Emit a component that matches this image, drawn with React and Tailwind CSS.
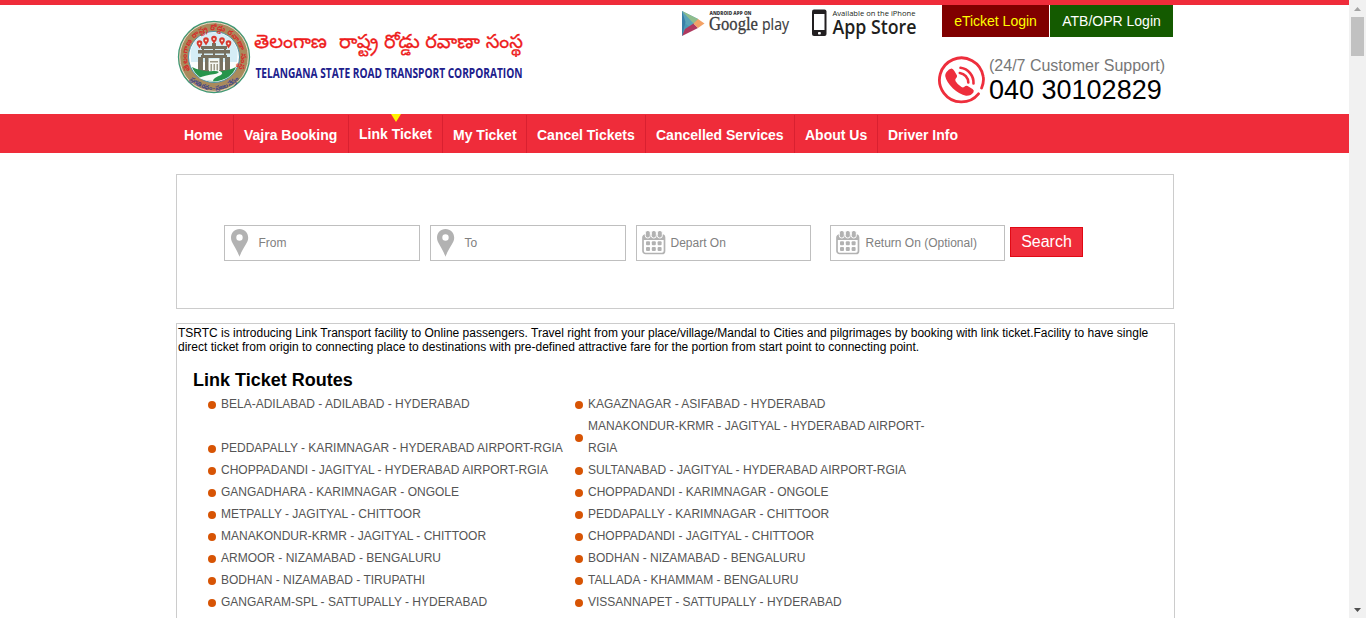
import React from 'react';

const SANS = "font-['Liberation_Sans',Arial,sans-serif]";

const NAV = [
  { label: 'Home', box: 'w-[58px] pl-[8px]' },
  { label: 'Vajra Booking', box: 'w-[115px] pl-[10px]' },
  { label: 'Link Ticket', box: 'w-[94px] pl-[10px]', active: true },
  { label: 'My Ticket', box: 'w-[84px] pl-[10px]' },
  { label: 'Cancel Tickets', box: 'w-[119px] pl-[10px]' },
  { label: 'Cancelled Services', box: 'w-[149px] pl-[10px]' },
  { label: 'About Us', box: 'w-[83px] pl-[10px]' },
  { label: 'Driver Info', box: 'w-[100px] pl-[10px]', last: true },
];

const ROUTES = [
  ['BELA-ADILABAD - ADILABAD - HYDERABAD', 'KAGAZNAGAR - ASIFABAD - HYDERABAD'],
  ['PEDDAPALLY - KARIMNAGAR - HYDERABAD AIRPORT-RGIA', 'MANAKONDUR-KRMR - JAGITYAL - HYDERABAD AIRPORT-RGIA'],
  ['CHOPPADANDI - JAGITYAL - HYDERABAD AIRPORT-RGIA', 'SULTANABAD - JAGITYAL - HYDERABAD AIRPORT-RGIA'],
  ['GANGADHARA - KARIMNAGAR - ONGOLE', 'CHOPPADANDI - KARIMNAGAR - ONGOLE'],
  ['METPALLY - JAGITYAL - CHITTOOR', 'PEDDAPALLY - KARIMNAGAR - CHITTOOR'],
  ['MANAKONDUR-KRMR - JAGITYAL - CHITTOOR', 'CHOPPADANDI - JAGITYAL - CHITTOOR'],
  ['ARMOOR - NIZAMABAD - BENGALURU', 'BODHAN - NIZAMABAD - BENGALURU'],
  ['BODHAN - NIZAMABAD - TIRUPATHI', 'TALLADA - KHAMMAM - BENGALURU'],
  ['GANGARAM-SPL - SATTUPALLY - HYDERABAD', 'VISSANNAPET - SATTUPALLY - HYDERABAD'],
];

function Emblem() {
  return (
    <svg width="74" height="74" viewBox="0 0 74 74" className="shrink-0">
      <defs>
        <path id="ringTop" d="M13.3 50 A27 27 0 1 1 60.700 50" />
        <path id="ringBottom" d="M11.200 57.500 A33 33 0 0 0 62.800 57.500" />
      </defs>
      <circle cx="37" cy="37" r="35.5" fill="#a98a5c" stroke="#3f9a76" strokeWidth="1.3" />
      <circle cx="37" cy="37" r="34.3" fill="none" stroke="#e6dcca" strokeWidth="1" />
      <circle cx="37" cy="37" r="25.5" fill="#fbfdfd" stroke="#4d93a8" strokeWidth="1" />
      <path d="M13.500 31 Q18 14 37 12.500 Q56 14 60.500 31 L60 42 H14Z" fill="#d5edf6" />
      <g fill="#77705f">
        <path d="M24 26h26v3H24zM21 30h32v3.500H21zM24 35h26v3H24zM21 37h5v15h-5zM28 36h3.500v15H28zM42.500 36H46v15h-3.500zM48 37h5v15h-5zM20 50h12v3H20zM42 50h12v3H42z" />
        <path d="M35 23h4v4h-4zM25 28h2v8h-2zM47 28h2v8h-2zM36 29h2v8h-2z" />
      </g>
      <g fill="#d8392f">
        <circle cx="22.500" cy="23" r="2.800" /><circle cx="29" cy="20" r="2.800" /><circle cx="37" cy="18.500" r="2.800" />
        <circle cx="45" cy="20" r="2.800" /><circle cx="51.500" cy="23" r="2.800" />
        <path d="M20 24.500l2.500 4 2.500-4zM26.500 21.500l2.500 4 2.500-4zM34.500 20l2.500 4 2.500-4zM42.500 21.500l2.500 4 2.500-4zM49 24.500l2.500 4 2.500-4z" />
      </g>
      <g fill="#fff3df">
        <circle cx="22.500" cy="23.500" r="0.900" /><circle cx="29" cy="20.500" r="0.900" /><circle cx="37" cy="19" r="0.900" /><circle cx="45" cy="20.500" r="0.900" /><circle cx="51.500" cy="23.500" r="0.900" />
      </g>
      <path d="M32 39h10v12H32z" fill="#f6f7f3" />
      <path d="M33 41h8v1.500h-8zM33.500 44h1.500v7h-1.500zM36.500 44H38v7h-1.500zM39.500 44H41v7h-1.500z" fill="#9b9785" />
      <path d="M15 47 Q24 52 37 51 Q50 52 59 47 Q54 60 37 61.500 Q20 60 15 47Z" fill="#27944b" />
      <path d="M34 50 Q47 51.500 38 54 Q27 55.500 22 58 Q28 61 36 61 Q36 58 44 55 Q48 52 39 50Z" fill="#f8faf7" />
      <text fontFamily="Noto Sans Telugu, Noto Sans, sans-serif" fontSize="7.600" fontWeight="700" fill="#d52e2c">
        <textPath href="#ringTop" textLength="110">తెలంగాణ రాష్ట్ర రోడ్డు రవాణా సంస్థ</textPath>
      </text>
      <text fontFamily="Noto Sans Telugu, Noto Sans, sans-serif" fontSize="6.200" fontWeight="700" fill="#41468d">
        <textPath href="#ringBottom" startOffset="2" textLength="55">ప్రగతి రథం - ప్రజల నేస్తం</textPath>
      </text>
    </svg>
  );
}

function Brand() {
  return (
    <div className="flex pt-[15px] pl-px">
      <Emblem />
      <svg width="280" height="74" viewBox="0 0 280 74" className="shrink-0">
        <text x="3" y="28" textLength="73" lengthAdjust="spacingAndGlyphs" fontFamily="Noto Sans Telugu, Noto Sans, sans-serif" fontSize="19" fill="#ee1c1c" stroke="#ee1c1c" strokeWidth="0.3">తెలంగాణ</text>
        <text x="88" y="28" textLength="184" lengthAdjust="spacingAndGlyphs" fontFamily="Noto Sans Telugu, Noto Sans, sans-serif" fontSize="19" fill="#ee1c1c" stroke="#ee1c1c" strokeWidth="0.3">రాష్ట్ర రోడ్డు రవాణా సంస్థ</text>
        <text x="4.500" y="57.500" textLength="267" lengthAdjust="spacingAndGlyphs" fontFamily="Open Sans, sans-serif" fontSize="14.500" fontWeight="700" fill="#20208c">TELANGANA STATE ROAD TRANSPORT CORPORATION</text>
      </svg>
    </div>
  );
}

function GooglePlay() {
  return (
    <svg width="110" height="36" viewBox="0 0 110 36" className="shrink-0">
      <path d="M1 6 L13 18.5 L1 31Z" fill="#4a9ab5" />
      <path d="M1 6 L17.5 14.2 L9 22 L1 16Z" fill="#5aa4b8" />
      <path d="M1 6 L17 14 L12.5 18.5Z" fill="#8fbd8c" />
      <path d="M1 31 L4 24 L12.5 18.5 L17 23Z" fill="#b0395f" />
      <path d="M1 6 L4.5 17 L1 31Z" fill="#397fa8" />
      <path d="M17 14 L23.5 18.5 L17 23 L12.5 18.5Z" fill="#f3a266" />
      <text x="28.500" y="9.500" textLength="42" lengthAdjust="spacingAndGlyphs" fontFamily="Open Sans, sans-serif" fontSize="5" fontWeight="800" fill="#3b3b3d">ANDROID APP ON</text>
      <text x="28" y="24.800" textLength="49" lengthAdjust="spacingAndGlyphs" fontFamily="Liberation Serif, serif" fontSize="19.500" fill="#3b3b3d" stroke="#3b3b3d" strokeWidth="0.300">Google</text>
      <text x="81" y="24.800" textLength="27" lengthAdjust="spacingAndGlyphs" fontFamily="Open Sans, sans-serif" fontSize="17" fill="#3b3b3d" stroke="#3b3b3d" strokeWidth="0.200">play</text>
    </svg>
  );
}

function AppStore() {
  return (
    <svg width="108" height="38" viewBox="0 0 108 38" className="shrink-0">
      <rect x="1" y="4.5" width="14.5" height="26.5" rx="2" fill="#221f20" />
      <rect x="3" y="9" width="10.5" height="16" fill="#fff" />
      <rect x="7" y="27" width="2.8" height="2.4" rx="0.7" fill="#fff" />
      <text x="21.500" y="10.600" textLength="83" lengthAdjust="spacingAndGlyphs" fontFamily="Open Sans, sans-serif" fontSize="8" fill="#221f20">Available on the iPhone</text>
      <text x="21.500" y="28.800" textLength="84" lengthAdjust="spacingAndGlyphs" fontFamily="Open Sans, sans-serif" fontSize="20.500" fontWeight="600" fill="#221f20">App Store</text>
    </svg>
  );
}

function SupportIcon() {
  return (
    <svg width="49" height="49" viewBox="0 0 49 49" className="shrink-0" fill="none" stroke="#ee2e3c">
      <path d="M41.500 37.800 A22 22 0 1 1 46.200 20.500 Q47.200 26 44.600 32" strokeWidth="2.800" strokeLinecap="round" />
      <path d="M9.5 16 Q12 12.5 14.5 12.4 Q16 12.4 17.4 15 L20 19.5 Q20.5 21 18.8 22.6 Q17.8 23.7 18.6 25.3 Q20.5 28.7 24.5 31 Q26.1 31.9 27.4 30.7 Q29 29 30.6 30 L35.5 33 Q37.5 34.5 36.5 36.2 Q34 40 29 39.7 Q22.5 38.5 16 32.5 Q9.2 25.7 8.2 20 Q8 18 9.5 16Z" fill="#ee2e3c" stroke="none" />
      <path d="M23.500 11.800 A15 15 0 0 1 36.500 27.500 M22.800 17 A9.800 9.800 0 0 1 31.300 26.500" strokeWidth="2.600" strokeLinecap="round" />
    </svg>
  );
}

function Pin() {
  return (
    <svg width="18" height="28" viewBox="0 0 18 28" className="shrink-0">
      <path d="M8.500 0 C3.500 0 0 3.700 0 8.700 C0 14 5 18 8.500 27.800 C12 18 17.200 14 17.200 8.700 C17.200 3.700 13.500 0 8.500 0Z M8.500 5.300 a3.200 3.200 0 1 1 0 6.400 a3.200 3.200 0 1 1 0-6.400Z" fill="#b2b2b2" fillRule="evenodd" />
    </svg>
  );
}

function CalendarIcon() {
  return (
    <svg width="24" height="24" viewBox="0 0 24 24" className="shrink-0">
      <rect x="1" y="4" width="21.5" height="18.5" rx="2.5" fill="#fff" stroke="#b2b2b2" strokeWidth="1.7" />
      <path d="M1 9V6q0-2.500 3-2.500h16q2.500 0 2.500 2.500v3z" fill="#b2b2b2" />
      <g fill="#b2b2b2" stroke="#fff" strokeWidth="1">
        <rect x="3.300" y="-0.500" width="5" height="7.500" rx="2.300" />
        <rect x="9.300" y="-0.500" width="5" height="7.500" rx="2.300" />
        <rect x="15.300" y="-0.500" width="5" height="7.500" rx="2.300" />
      </g>
      <g fill="#b2b2b2">
        <rect x="4" y="10.200" width="4" height="4" rx="1" /><rect x="9.800" y="10.200" width="4" height="4" rx="1" /><rect x="15.600" y="10.200" width="4" height="4" rx="1" />
        <rect x="4" y="16" width="4" height="4" rx="1" /><rect x="9.800" y="16" width="4" height="4" rx="1" /><rect x="15.600" y="16" width="4" height="4" rx="1" />
      </g>
    </svg>
  );
}

function Field({ icon, label, box }) {
  return (
    <div className={`flex h-9 shrink-0 border border-[#bfbfbf] text-xs leading-[34px] text-[#808080] ${box}`}>
      {icon}
      <span>{label}</span>
    </div>
  );
}

function Route({ children }) {
  return (
    <li className="flex items-center gap-[5px]">
      <span className="mt-[2px] size-2 shrink-0 rounded-full bg-[#d75404]" />
      <span className="leading-[22px]">{children}</span>
    </li>
  );
}

export default function App() {
  return (
    <div className={`flex h-[618px] overflow-hidden bg-white ${SANS}`}>
      <div className="flex w-[1349px] shrink-0 flex-col">
        <header className="h-[114px] shrink-0 border-t-[5px] border-[#ef2c3a]">
          <div className="ml-[176px] flex w-[999px] justify-between">
            <Brand />
            <div className="flex">
              <div className="flex items-start gap-[20px]">
                <GooglePlay />
                <AppStore />
              </div>
              <div className="ml-[18px] flex w-[238px] flex-col">
                <div className="flex h-8 gap-px pl-[5px] text-sm leading-8">
                  <a className="w-[107px] bg-[#800000] text-center text-[#ffff00]">eTicket Login</a>
                  <a className="w-[123px] bg-[#145a00] text-center text-white">ATB/OPR Login</a>
                </div>
                <div className="mt-[19px] flex gap-[3px]">
                  <SupportIcon />
                  <div className="whitespace-nowrap">
                    <div className="text-base leading-[19px] text-[#777777]">(24/7 Customer Support)</div>
                    <div className="text-[27px] leading-[30px] text-black">040 30102829</div>
                  </div>
                </div>
              </div>
            </div>
          </div>
        </header>

        <nav className="flex h-[39px] shrink-0 bg-[#ef2c3a] pl-[176px] text-sm font-bold whitespace-nowrap text-white">
          {NAV.map((item) => (
            <a
              key={item.label}
              className={`relative mt-px ${item.active ? 'leading-[39px]' : 'leading-[41px]'} ${item.last ? '' : 'border-r border-[#d92030]'} ${item.box}`}
            >
              {item.label}
              {item.active && (
                <svg width="10" height="8" viewBox="0 0 10 8" className="absolute -top-px left-[42px]">
                  <path d="M0 0h10L5 8z" fill="#fff200" />
                </svg>
              )}
            </a>
          ))}
        </nav>

        <section className="mt-[21px] ml-[176px] flex h-[135px] w-[998px] shrink-0 items-start border border-[#cccccc] pt-[50px] pl-[47px]">
          <Field icon={<Pin />} label="From" box="w-[196px] pl-[6px] gap-[9.5px] [&>svg]:mt-[3px]" />
          <Field icon={<Pin />} label="To" box="ml-[10px] w-[196px] pl-[6px] gap-[9.5px] [&>svg]:mt-[3px]" />
          <Field icon={<CalendarIcon />} label="Depart On" box="ml-[10px] w-[175px] pl-[5px] gap-[4.5px] [&>svg]:mt-[5px]" />
          <Field icon={<CalendarIcon />} label="Return On (Optional)" box="ml-[19px] w-[175px] pl-[5px] gap-[5.5px] [&>svg]:mt-[5px]" />
          <button className="mt-[2px] ml-[5px] h-[30px] w-[73px] border border-[#e10914] bg-[#ef2c3a] text-base leading-7 text-white">
            Search
          </button>
        </section>

        <main className="mt-[14px] ml-[176px] h-[400px] w-[999px] shrink-0 border border-[#cccccc]">
          <p className="pt-[2px] pl-px text-xs leading-[14px] whitespace-nowrap text-black">
            TSRTC is introducing Link Transport facility to Online passengers. Travel right from your place/village/Mandal to Cities and pilgrimages by booking with link ticket.Facility to have single
            <br />
            direct ticket from origin to connecting place to destinations with pre-defined attractive fare for the portion from start point to connecting point.
          </p>
          <h2 className="mt-[15px] pl-[16px] text-lg leading-[22px] font-bold text-black">Link Ticket Routes</h2>
          <ul className="mt-[2px] ml-[31px] text-xs text-[#555555]">
            {ROUTES.map(([left, right]) => (
              <div key={left} className="grid grid-cols-[367px_355px] items-end">
                <Route>{left}</Route>
                <Route>{right}</Route>
              </div>
            ))}
          </ul>
        </main>
      </div>

      <aside className="flex w-[17px] shrink-0 flex-col items-center bg-[#f1f1f1]">
        <svg width="17" height="17" viewBox="0 0 17 17" className="shrink-0">
          <path d="M5 11h7L8.500 7z" fill="#a3a3a3" />
        </svg>
        <div className="h-[39px] w-[13px] bg-[#c1c1c1]" />
        <svg width="17" height="17" viewBox="0 0 17 17" className="mt-auto shrink-0">
          <path d="M5 7h7L8.500 11z" fill="#505050" />
        </svg>
      </aside>
    </div>
  );
}
